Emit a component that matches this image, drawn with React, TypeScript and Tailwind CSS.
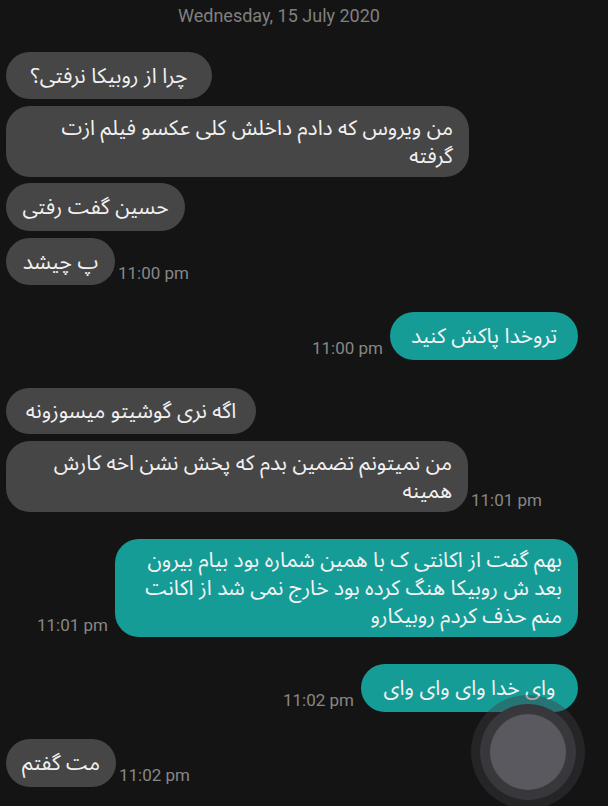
import React from "react";

const AR = { fontFamily: '"Noto Sans Arabic", "DejaVu Sans", sans-serif' };
const RB = { fontFamily: 'Roboto, "Liberation Sans", sans-serif' };

function Time({ t }: { t: string }) {
  return (
    <span style={RB} className="mb-[3px] text-[17px] leading-[18px] text-[#878787] whitespace-nowrap">
      {t}
    </span>
  );
}

function Lines({ lines }: { lines: string[] }) {
  const single = lines.length === 1;
  return (
    <>
      {lines.map((l, i) => (
        <div key={i} className={single ? "text-center" : "text-right"}>
          {l}
        </div>
      ))}
    </>
  );
}

function In({ w, h, lines, time, mt }: { w: string; h: string; lines: string[]; time?: string; mt: string }) {
  return (
    <div className={`flex items-end gap-[3px] pl-[6px] ${mt}`}>
      <div
        dir="rtl"
        style={AR}
        className={`${w} ${h} flex flex-col justify-center rounded-[24px] bg-[#464646] px-[16px] text-[21px] leading-[28px] text-[#f1f1f1] whitespace-nowrap`}
      >
        <Lines lines={lines} />
      </div>
      {time && <Time t={time} />}
    </div>
  );
}

function Out({ w, h, lines, time, mt }: { w: string; h: string; lines: string[]; time: string; mt: string }) {
  return (
    <div className={`flex items-end justify-end gap-[7px] pr-[30px] ${mt}`}>
      <Time t={time} />
      <div
        dir="rtl"
        style={AR}
        className={`${w} ${h} flex flex-col justify-center rounded-[24px] bg-[#169c97] px-[16px] text-[21px] leading-[28px] text-[#f3f3f3] whitespace-nowrap`}
      >
        <Lines lines={lines} />
      </div>
    </div>
  );
}

export default function App() {
  return (
    <div className="relative w-[608px] h-[806px] overflow-hidden bg-[#141414]">
      <div className="flex flex-col">
        <div style={RB} className="pt-[6px] pr-[50px] text-center text-[18px] leading-[20px] text-[#808080]">
          Wednesday, 15 July 2020
        </div>
        <In mt="mt-[26px]" w="w-[206px]" h="h-[47px]" lines={["چرا از روبیکا نرفتی؟"]} />
        <In mt="mt-[7px]" w="w-[463px]" h="h-[71px]" lines={["من ویروس که دادم داخلش کلی عکسو فیلم ازت", "گرفته"]} />
        <In mt="mt-[6px]" w="w-[179px]" h="h-[48px]" lines={["حسین گفت رفتی"]} />
        <In mt="mt-[7px]" w="w-[109px]" h="h-[47px]" lines={["پ چیشد"]} time="11:00 pm" />
        <Out mt="mt-[27px]" w="w-[188px]" h="h-[48px]" lines={["تروخدا پاکش کنید"]} time="11:00 pm" />
        <In mt="mt-[28px]" w="w-[250px]" h="h-[46px]" lines={["اگه نری گوشیتو میسوزونه"]} />
        <In
          mt="mt-[7px]"
          w="w-[462px]"
          h="h-[71px]"
          lines={["من نمیتونم تضمین بدم که پخش نشن اخه کارش", "همینه"]}
          time="11:01 pm"
        />
        <Out
          mt="mt-[27px]"
          w="w-[463px]"
          h="h-[98px]"
          lines={[
            "بهم گفت از اکانتی ک با همین شماره بود بیام بیرون",
            "بعد ش روبیکا هنگ کرده بود خارج نمی شد از اکانت",
            "منم حذف کردم روبیکارو",
          ]}
          time="11:01 pm"
        />
        <Out mt="mt-[27px]" w="w-[217px]" h="h-[48px]" lines={["وای خدا وای وای وای"]} time="11:02 pm" />
        <In mt="mt-[27px]" w="w-[110px]" h="h-[48px]" lines={["مت گفتم"]} time="11:02 pm" />
      </div>

      <div className="absolute left-[471px] top-[695px] flex h-[114px] w-[114px] items-center justify-center rounded-full bg-[rgba(62,62,68,0.42)]">
        <div className="flex h-[96px] w-[96px] items-center justify-center rounded-full bg-[#37373c]">
          <div className="h-[76px] w-[76px] rounded-full bg-[#59595f]" />
        </div>
      </div>
    </div>
  );
}
